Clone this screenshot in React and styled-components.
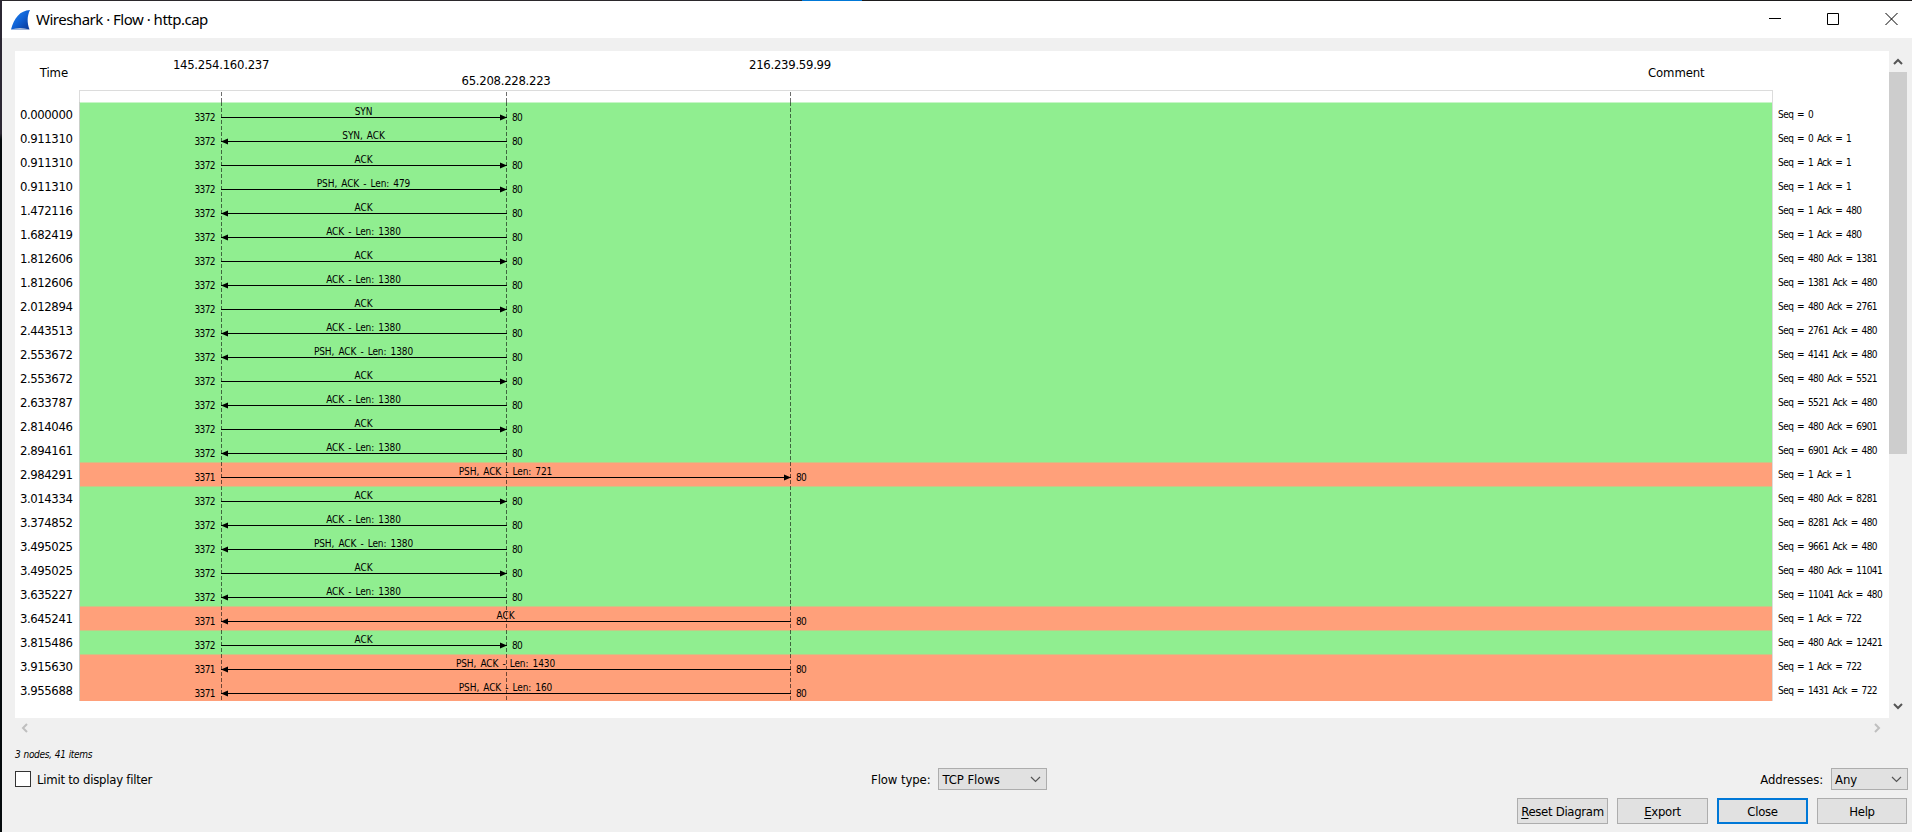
import React from 'react';
import styled, { createGlobalStyle, css } from 'styled-components';

const GlobalStyle = createGlobalStyle`
  * { box-sizing: border-box; }
  body { margin: 0; overflow: hidden; background: #f0f0f0; }
`;

const ui = css`
  font-family: 'DejaVu Sans Condensed', 'DejaVu Sans', sans-serif;
  font-stretch: condensed;
  font-size: 13px;
  letter-spacing: -0.1px;
  color: #000;
  white-space: nowrap;
`;

const small = css`
  font-size: 10px;
  letter-spacing: -0.2px;
`;

const Dialog = styled.div`
  ${ui}
  width: 1912px;
  height: 832px;
  display: flex;
  flex-direction: column;
  background: #f0f0f0;
  border-left: 2px solid;
  border-image: linear-gradient(#2b2733 0, #2b2733 134px, #050a0c 140px, #050a0c 100%) 1;
  border-image-width: 0 0 0 2px;
`;

const Edge = styled.div`
  height: 1px;
  background: linear-gradient(90deg, #2b282c 800px, #0078d7 800px, #0078d7 860px, #1d1b1c 860px);
`;

const TitleBar = styled.header`
  height: 37px;
  display: flex;
  align-items: center;
  background: #fff;
  padding: 0 14px 0 7px;
`;

const Title = styled.h1`
  margin: 0 auto 1px 3px;
  font: 400 15px/20px 'Noto Sans', sans-serif;
  letter-spacing: -0.5px;
`;

const WindowButtons = styled.div`
  display: flex;
  gap: 46px;
  margin-bottom: 1px;
`;

const Body = styled.main`
  margin: 13px 5px 0 13px;
  display: grid;
  grid-template-columns: 1874px 18px;
  grid-template-rows: 667px 19px;
`;

const Plot = styled.section`
  position: relative;
  background: #fff;
`;

const Header = styled.div`
  height: 39px;
  display: grid;
  grid-template-columns: 64px 142px 285px 284px 858px 241px;
`;

const Heading = styled.div`
  line-height: 16px;
  padding-top: 14px;
  text-align: ${(p) => p.$align || 'left'};
  padding-right: ${(p) => p.$right || 0}px;
`;

const Address = styled.div`
  width: 0;
  padding-top: ${(p) => p.$top}px;
  display: flex;
  justify-content: center;
  line-height: 16px;
  letter-spacing: -0.28px;
`;

const AxisTop = styled.div`
  margin-left: 64px;
  width: 1694px;
  height: 12px;
  border: 1px solid #dcdcdc;
  border-bottom: 0;
`;

const Rows = styled.div`
  height: 599px;
  overflow: hidden;
`;

const Row = styled.div`
  height: 24px;
  display: grid;
  grid-template-columns: 64px 1694px 116px;
`;

const Time = styled.div`
  padding-left: 5px;
  line-height: 25px;
  letter-spacing: -0.42px;
`;

const Comment = styled.div`
  ${small}
  padding-left: 5px;
  line-height: 26px;
  letter-spacing: -0.55px;
  word-spacing: 1.5px;
`;

const colors = { green: '#90ee90', coral: '#ffa07a' };

const Band = styled.div`
  display: grid;
  grid-template-columns: 141px ${(p) => p.$span}px 1fr;
  background: linear-gradient(
    ${(p) => p.$edge} 1px,
    ${(p) => colors[p.$tone]} 1px
  );
  border-left: 1px solid #c9cfc9;
  border-right: 1px solid #dcdcdc;
`;

const Port = styled.div`
  ${small}
  line-height: 32px;
  text-align: ${(p) => p.$align};
  padding: 0 6px 0 5px;
  letter-spacing: -0.6px;
`;

const Flow = styled.div`
  ${small}
  display: flex;
  flex-direction: column;
  align-items: center;
  line-height: 12px;
  padding-top: 4px;
  letter-spacing: -0.08px;
  word-spacing: 1.3px;
`;

const FlowLabel = styled.span`
  padding-right: 1px;
`;

const ArrowSvg = styled.svg`
  display: block;
  flex: none;
  margin-top: -4px;
`;

const Lifelines = styled.svg`
  position: absolute;
  left: 0;
  top: 41px;
`;

const Bar = styled.div`
  display: flex;
  flex-direction: ${(p) => (p.$vertical ? 'column' : 'row')};
  justify-content: space-between;
  align-items: center;
  padding: ${(p) => (p.$vertical ? '7px 0 8px' : '0 8px 0 6px')};
`;

const Thumb = styled.div`
  width: 18px;
  height: 382px;
  margin: 7px 0 auto;
  background: #cdcdcd;
`;

const Hint = styled.div`
  ${small}
  font-style: italic;
  word-spacing: 0.5px;
  letter-spacing: -0.3px;
  margin: 10px 0 0 13px;
  height: 15px;
  line-height: 15px;
`;

const Controls = styled.div`
  height: 22px;
  margin: 6px 4px 0 13px;
  display: grid;
  grid-template-columns: 22px 834px 1fr auto;
  align-items: center;
`;

const CheckBox = styled.span`
  width: 16px;
  height: 16px;
  border: 1px solid #333;
  background: #fff;
`;

const Control = styled.label`
  display: flex;
  align-items: center;
  letter-spacing: ${(p) => (p.$tight ? '-0.24px' : '-0.1px')};
`;

const Select = styled.div`
  width: ${(p) => p.$width}px;
  height: 22px;
  margin-left: 8px;
  padding: 0 5px 0 3px;
  border: 1px solid #adadad;
  background: #e1e1e1;
  display: flex;
  align-items: center;
  justify-content: space-between;
`;

const Buttons = styled.footer`
  margin: 8px 5px 0 0;
  display: flex;
  justify-content: flex-end;
  gap: 9px;
`;

const Button = styled.button`
  ${ui}
  letter-spacing: -0.3px;
  width: ${(p) => p.$width || 91}px;
  height: 26px;
  padding: 0;
  background: #e1e1e1;
  border: ${(p) => (p.$primary ? '2px solid #0078d7' : '1px solid #adadad')};
`;

const Key = styled.span`
  text-decoration: underline;
  text-underline-offset: 2px;
`;

// time, target (1 = second node, 2 = third node), direction, label, comment
const flows = [
  ['0.000000', 1, 'r', 'SYN', 'Seq = 0'],
  ['0.911310', 1, 'l', 'SYN, ACK', 'Seq = 0 Ack = 1'],
  ['0.911310', 1, 'r', 'ACK', 'Seq = 1 Ack = 1'],
  ['0.911310', 1, 'r', 'PSH, ACK - Len: 479', 'Seq = 1 Ack = 1'],
  ['1.472116', 1, 'l', 'ACK', 'Seq = 1 Ack = 480'],
  ['1.682419', 1, 'l', 'ACK - Len: 1380', 'Seq = 1 Ack = 480'],
  ['1.812606', 1, 'r', 'ACK', 'Seq = 480 Ack = 1381'],
  ['1.812606', 1, 'l', 'ACK - Len: 1380', 'Seq = 1381 Ack = 480'],
  ['2.012894', 1, 'r', 'ACK', 'Seq = 480 Ack = 2761'],
  ['2.443513', 1, 'l', 'ACK - Len: 1380', 'Seq = 2761 Ack = 480'],
  ['2.553672', 1, 'l', 'PSH, ACK - Len: 1380', 'Seq = 4141 Ack = 480'],
  ['2.553672', 1, 'r', 'ACK', 'Seq = 480 Ack = 5521'],
  ['2.633787', 1, 'l', 'ACK - Len: 1380', 'Seq = 5521 Ack = 480'],
  ['2.814046', 1, 'r', 'ACK', 'Seq = 480 Ack = 6901'],
  ['2.894161', 1, 'l', 'ACK - Len: 1380', 'Seq = 6901 Ack = 480'],
  ['2.984291', 2, 'r', 'PSH, ACK - Len: 721', 'Seq = 1 Ack = 1'],
  ['3.014334', 1, 'r', 'ACK', 'Seq = 480 Ack = 8281'],
  ['3.374852', 1, 'l', 'ACK - Len: 1380', 'Seq = 8281 Ack = 480'],
  ['3.495025', 1, 'l', 'PSH, ACK - Len: 1380', 'Seq = 9661 Ack = 480'],
  ['3.495025', 1, 'r', 'ACK', 'Seq = 480 Ack = 11041'],
  ['3.635227', 1, 'l', 'ACK - Len: 1380', 'Seq = 11041 Ack = 480'],
  ['3.645241', 2, 'l', 'ACK', 'Seq = 1 Ack = 722'],
  ['3.815486', 1, 'r', 'ACK', 'Seq = 480 Ack = 12421'],
  ['3.915630', 2, 'l', 'PSH, ACK - Len: 1430', 'Seq = 1 Ack = 722'],
  ['3.955688', 2, 'l', 'PSH, ACK - Len: 160', 'Seq = 1431 Ack = 722'],
];

const spans = { 1: 286, 2: 570 };

function Arrow({ width, dir }) {
  return (
    <ArrowSvg width={width} height="7">
      <path d={`M0 3.5H${width}`} stroke="#000" />
      <path d={dir === 'r' ? `M${width} 3.5l-7-3v6z` : 'M0 3.5l7-3v6z'} />
    </ArrowSvg>
  );
}

function FlowRow({ data, prev }) {
  const [time, target, dir, label, comment] = data;
  const tone = target === 2 ? 'coral' : 'green';
  const edge = !prev ? '#c8f6c8' : prev[1] !== target ? '#c8c785' : colors[tone];
  return (
    <Row>
      <Time>{time}</Time>
      <Band $span={spans[target]} $tone={tone} $edge={edge}>
        <Port $align="right">{target === 2 ? '3371' : '3372'}</Port>
        <Flow>
          <FlowLabel>{label}</FlowLabel>
          <Arrow width={spans[target]} dir={dir} />
        </Flow>
        <Port $align="left">80</Port>
      </Band>
      <Comment>{comment}</Comment>
    </Row>
  );
}

function Chevron({ d, w, h, color = '#555', stroke = 2 }) {
  return (
    <svg width={w} height={h} fill="none" stroke={color} strokeWidth={stroke}>
      <path d={d} />
    </svg>
  );
}

export default function App() {
  return (
    <Dialog>
      <GlobalStyle />
      <Edge />
      <TitleBar>
        <svg width="24" height="22" viewBox="0 0 24 22">
          <defs>
            <linearGradient id="fin" x1="0" y1="0" x2="1" y2="1">
              <stop offset="0" stopColor="#2b8af0" />
              <stop offset=".5" stopColor="#0f62d6" />
              <stop offset="1" stopColor="#0a3592" />
            </linearGradient>
          </defs>
          <path d="M2 20.5C5 9 11 1.5 21 1C18 7 18 14 20.5 20.5Z" fill="url(#fin)" />
          <path d="M2 20.5C8 18.5 14 18.5 20.5 20.5Z" fill="#b5c3dc" />
        </svg>
        <Title>Wireshark · Flow · http.cap</Title>
        <WindowButtons>
          <Chevron w={12} h={12} d="M0 5.5H12" color="#000" stroke={1} />
          <Chevron w={12} h={12} d="M.5.5h11v11H.5z" color="#000" stroke={1} />
          <Chevron w={13} h={12} d="M.5 0l12 12M12.5 0l-12 12" color="#000" stroke={1} />
        </WindowButtons>
      </TitleBar>

      <Body>
        <Plot>
          <Header>
            <Heading $align="right" $right={11}>Time</Heading>
            <div />
            <Address $top={6}>145.254.160.237</Address>
            <Address $top={22}>65.208.228.223</Address>
            <Address $top={6}>216.239.59.99</Address>
            <Heading>Comment</Heading>
          </Header>
          <AxisTop />
          <Rows>
            {flows.map((f, i) => (
              <FlowRow key={i} data={f} prev={flows[i - 1]} />
            ))}
          </Rows>
          <Lifelines width="1000" height="608" fill="none" stroke="#000" strokeOpacity=".57" strokeDasharray="4 2">
            <path d="M206.5 0V10M491.5 0V10M775.5 0V10" />
            <path d="M206.5 10V608M491.5 10V608M775.5 10V608" />
          </Lifelines>
        </Plot>
        <Bar $vertical>
          <Chevron w={10} h={7} d="M1 6l4-4 4 4" />
          <Thumb />
          <Chevron w={10} h={7} d="M1 1l4 4 4-4" />
        </Bar>
        <Bar>
          <Chevron w={7} h={10} d="M6 1L2 5l4 4" color="#bfbfbf" />
          <Chevron w={7} h={10} d="M1 1l4 4-4 4" color="#bfbfbf" />
        </Bar>
      </Body>

      <Hint>3 nodes, 41 items</Hint>
      <Controls>
        <CheckBox />
        <Control $tight>Limit to display filter</Control>
        <Control>
          Flow type:
          <Select $width={109}>
            TCP Flows
            <Chevron w={11} h={7} d="M1 1l4.5 4.5L10 1" stroke={1.2} />
          </Select>
        </Control>
        <Control>
          Addresses:
          <Select $width={77}>
            Any
            <Chevron w={11} h={7} d="M1 1l4.5 4.5L10 1" stroke={1.2} />
          </Select>
        </Control>
      </Controls>
      <Buttons>
        <Button><Key>R</Key>eset Diagram</Button>
        <Button><Key>E</Key>xport</Button>
        <Button $primary>Close</Button>
        <Button $width={90}>Help</Button>
      </Buttons>
    </Dialog>
  );
}
